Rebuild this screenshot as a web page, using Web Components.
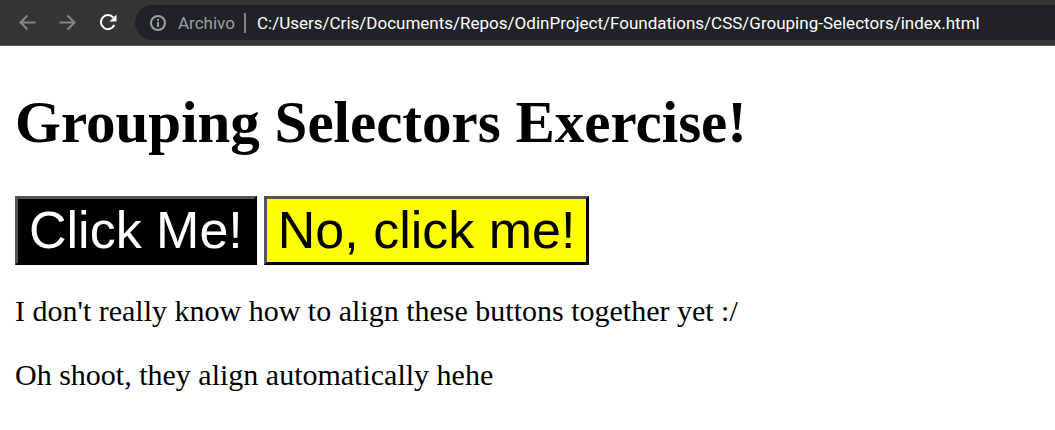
<!DOCTYPE html>
<html lang="en">
<head>
<meta charset="utf-8">
<title>Grouping Selectors</title>
<style>
body { margin: 0; background: #fff; }
</style>
</head>
<body>
<browser-window>
  <browser-toolbar slot="toolbar" url="C:/Users/Cris/Documents/Repos/OdinProject/Foundations/CSS/Grouping-Selectors/index.html"></browser-toolbar>
  <exercise-page>
    <span slot="title">Grouping Selectors Exercise!</span>
    <click-button slot="buttons" tone="dark">Click Me!</click-button>
    <click-button slot="buttons" tone="bright">No, click me!</click-button>
    <text-line>I don't really know how to align these buttons together yet :/</text-line>
    <text-line>Oh shoot, they align automatically hehe</text-line>
  </exercise-page>
</browser-window>
<script>
class BrowserWindow extends HTMLElement {
  constructor() {
    super();
    this.attachShadow({ mode: "open" }).innerHTML = `
      <style>:host { display: block; }</style>
      <slot name="toolbar"></slot><slot></slot>`;
  }
}

class BrowserToolbar extends HTMLElement {
  constructor() {
    super();
    this.attachShadow({ mode: "open" }).innerHTML = `
      <style>
        :host { display: block; background: #353535; border-bottom: 1px solid #606060;
          font: 17px/24px Roboto, "Open Sans", sans-serif; }
        header { display: flex; align-items: center; padding: 5px 0 5px 16px; }
        nav { display: flex; gap: 16px; margin-right: 15px; }
        button { display: block; width: 24px; height: 24px; padding: 0; border: 0; background: none; color: #868686; }
        button.active { color: #fff; }
        svg { display: block; fill: none; stroke: currentColor; }
        form { flex: 1; min-width: 0; display: flex; align-items: center; height: 35px; box-sizing: border-box;
          padding-left: 14px; background: #202226; border-radius: 18px 0 0 18px; color: #9aa0a6; }
        form svg { flex: none; margin-right: 11px; }
        label { width: 58px; }
        i { width: 2px; height: 20px; margin: 0 11px 0 8px; background: #808387; }
        input { flex: 1; min-width: 0; height: 24px; padding: 0; border: 0; outline: 0; background: none; color: #fff; font: inherit; }
      </style>
      <header>
        <nav>
          <button type="button" aria-label="Back"><svg width="24" height="24" stroke-width="2"><path d="M19.500 11.500H4.500M11.500 4.500l-7 7 7 7"/></svg></button>
          <button type="button" aria-label="Forward"><svg width="24" height="24" stroke-width="2"><path d="M3.500 11.500h15M11.500 4.500l7 7-7 7"/></svg></button>
          <button type="button" class="active" aria-label="Reload"><svg width="24" height="24" stroke-width="2"><path d="M17.200 6.500A7 7 0 1 0 18.300 14"/><path d="M20.500 3.500v7h-7z" fill="currentColor" stroke="none"/></svg></button>
        </nav>
        <form>
          <svg width="18" height="18" stroke-width="2"><circle cx="9" cy="9" r="7"/><path d="M9 8v5M9 5v2"/></svg>
          <label for="address">Archivo</label><i></i>
          <input id="address" type="text" spellcheck="false">
        </form>
      </header>`;
  }
  connectedCallback() {
    this.shadowRoot.querySelector("input").value = this.getAttribute("url");
  }
}

class ExercisePage extends HTMLElement {
  constructor() {
    super();
    this.attachShadow({ mode: "open" }).innerHTML = `
      <style>
        :host { display: block; padding: 43px 15px 0; color: #000;
          font-family: "Liberation Serif", "Times New Roman", serif; }
        h1 { margin: 0 0 41px; font-size: 59px; line-height: 66px; }
        div { display: flex; flex-wrap: wrap; gap: 7px; margin-bottom: 29px; }
      </style>
      <h1><slot name="title"></slot></h1>
      <div><slot name="buttons"></slot></div>
      <slot></slot>`;
  }
}

class ClickButton extends HTMLElement {
  constructor() {
    super();
    this.attachShadow({ mode: "open" }).innerHTML = `
      <style>
        :host { display: block; }
        button { display: block; margin: 0; padding: 2px 11px; border: 3px outset #000; border-radius: 0;
          font: 52px/59px "Liberation Sans", Arial, sans-serif; }
        :host([tone="dark"]) button { background: #000; color: #fff; }
        :host([tone="bright"]) button { background: #ff0; color: #000; }
      </style>
      <button type="button"><slot></slot></button>`;
  }
}

class TextLine extends HTMLElement {
  constructor() {
    super();
    this.attachShadow({ mode: "open" }).innerHTML = `
      <style>
        :host { display: block; }
        p { margin: 0 0 30px; font-size: 30px; line-height: 34px; }
      </style>
      <p><slot></slot></p>`;
  }
}

customElements.define("browser-window", BrowserWindow);
customElements.define("browser-toolbar", BrowserToolbar);
customElements.define("exercise-page", ExercisePage);
customElements.define("click-button", ClickButton);
customElements.define("text-line", TextLine);
</script>
</body>
</html>
